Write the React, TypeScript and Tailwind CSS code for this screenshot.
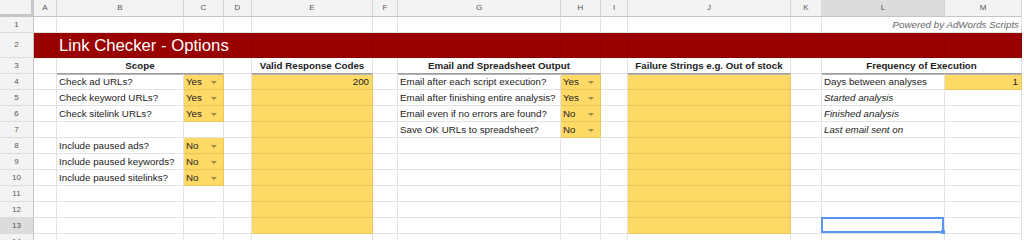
import React from "react";

type Spec = { t?: string; y?: boolean; dd?: boolean; i?: boolean; r?: boolean };

const COLS = ["A", "B", "C", "D", "E", "F", "G", "H", "I", "J", "K", "L", "M"];
// columns whose row 4 cells carry the darker rule under the section headings
const RULED = ["B", "C", "E", "G", "H", "J", "L", "M"];

const DATA: Record<number, Record<string, Spec>> = {
  4: {
    B: { t: "Check ad URLs?" },
    C: { t: "Yes", y: true, dd: true },
    E: { t: "200", r: true },
    G: { t: "Email after each script execution?" },
    H: { t: "Yes", y: true, dd: true },
    L: { t: "Days between analyses" },
    M: { t: "1", y: true, r: true },
  },
  5: {
    B: { t: "Check keyword URLs?" },
    C: { t: "Yes", y: true, dd: true },
    G: { t: "Email after finishing entire analysis?" },
    H: { t: "Yes", y: true, dd: true },
    L: { t: "Started analysis", i: true },
  },
  6: {
    B: { t: "Check sitelink URLs?" },
    C: { t: "Yes", y: true, dd: true },
    G: { t: "Email even if no errors are found?" },
    H: { t: "No", y: true, dd: true },
    L: { t: "Finished analysis", i: true },
  },
  7: {
    G: { t: "Save OK URLs to spreadsheet?" },
    H: { t: "No", y: true, dd: true },
    L: { t: "Last email sent on", i: true },
  },
  8: { B: { t: "Include paused ads?" }, C: { t: "No", y: true, dd: true } },
  9: { B: { t: "Include paused keywords?" }, C: { t: "No", y: true, dd: true } },
  10: { B: { t: "Include paused sitelinks?" }, C: { t: "No", y: true, dd: true } },
};

const textCell = "flex items-center whitespace-nowrap px-[2px] text-[9.75px] leading-[16px] text-[#222]";

function RowHead({ n }: { n: number }) {
  return (
    <div
      className={`flex items-center justify-center border-r border-b border-r-[#c6c6c6] border-b-[#dcdcdc] text-[8px] text-[#555] ${
        n === 13 ? "bg-[#dcdcdc]" : "bg-[#f3f3f3]"
      }`}
    >
      {n}
    </div>
  );
}

function DataCell({ col, row }: { col: string; row: number }) {
  const s = DATA[row]?.[col] ?? {};
  const yellow = s.y || ((col === "E" || col === "J") && row <= 13);
  const selected = col === "L" && row === 13;
  return (
    <div
      className={`relative border-r border-b ${textCell} ${
        yellow ? "bg-[#ffd966] border-[#e6c660]" : "bg-white border-[#e2e2e2]"
      } ${s.r ? "justify-end pr-[3px]" : ""} ${s.i ? "italic" : ""} ${
        row === 4 && RULED.includes(col) ? "shadow-[inset_0_1px_0_#b4b4b4]" : ""
      }`}
    >
      {s.t}
      {s.dd && (
        <span className="absolute right-[6px] top-[7px] h-0 w-0 border-x-[3px] border-t-[3px] border-x-transparent border-t-[#9c8a4c]" />
      )}
      {selected && (
        <>
          <span className="absolute -left-px -top-px right-0 bottom-0 border-2 border-[#5a95f5]" />
          <span className="absolute right-[-2px] bottom-[-2px] h-[5px] w-[5px] bg-[#5a95f5]" />
        </>
      )}
    </div>
  );
}

function SectionHead({ label, span2 }: { label: string; span2?: boolean }) {
  return (
    <div
      className={`flex items-center justify-center whitespace-nowrap border-r border-b border-r-[#e2e2e2] border-b-[#9e9e9e] bg-white text-[9.75px] font-bold leading-[16px] text-[#222] ${
        span2 ? "col-span-2" : ""
      }`}
    >
      {label}
    </div>
  );
}

function Blank() {
  return <div className="border-r border-b border-[#e2e2e2] bg-white" />;
}

export default function App() {
  const dataRows = [4, 5, 6, 7, 8, 9, 10, 11, 12, 13, 14];

  return (
    <div className="h-[240px] w-[1024px] overflow-hidden bg-white font-['Liberation_Sans',Arial,sans-serif]">
      <div className="grid grid-cols-[34px_23px_127px_40px_28px_121px_25px_163px_40px_27px_163px_31px_123px_77px_2px] grid-rows-[17px_16px_25px_repeat(12,16px)]">
        {/* column letters */}
        <div className="border-r-[3px] border-b-[3px] border-[#c6c6c6] bg-[#f3f3f3]" />
        {COLS.map((c) => (
          <div
            key={c}
            className={`flex items-center justify-center border-r border-b border-r-[#d6d6d6] border-b-[#c6c6c6] text-[8px] text-[#555] ${
              c === "L" ? "bg-[#dcdcdc]" : "bg-[#f3f3f3]"
            }`}
          >
            {c}
          </div>
        ))}
        <div className="bg-white" />

        {/* row 1 */}
        <RowHead n={1} />
        {COLS.slice(0, 11).map((c) => (
          <Blank key={c} />
        ))}
        <div className="col-span-2 flex items-center justify-end whitespace-nowrap border-r border-b border-[#e2e2e2] bg-white pr-[2px] text-[9.75px] italic leading-[16px] text-[#666]">
          Powered by AdWords Scripts
        </div>
        <div className="bg-white" />

        {/* row 2: title band */}
        <RowHead n={2} />
        {COLS.map((c) => (
          <div key={c} className="flex items-center border-r border-b border-[#8c0000] bg-[#990000] pt-[2px]">
            {c === "B" && (
              <span className="relative z-10 whitespace-nowrap pl-[2px] text-[16.7px] leading-[20px] text-white">
                Link Checker - Options
              </span>
            )}
          </div>
        ))}
        <div className="bg-white" />

        {/* row 3: section headings */}
        <RowHead n={3} />
        <Blank />
        <SectionHead label="Scope" span2 />
        <Blank />
        <SectionHead label="Valid Response Codes" />
        <Blank />
        <SectionHead label="Email and Spreadsheet Output" span2 />
        <Blank />
        <SectionHead label="Failure Strings e.g. Out of stock" />
        <Blank />
        <SectionHead label="Frequency of Execution" span2 />
        <div className="bg-white" />

        {/* rows 4-14 */}
        {dataRows.map((r) => (
          <React.Fragment key={r}>
            <RowHead n={r} />
            {COLS.map((c) => (
              <DataCell key={c} col={c} row={r} />
            ))}
            <div className="bg-white" />
          </React.Fragment>
        ))}
      </div>
    </div>
  );
}
